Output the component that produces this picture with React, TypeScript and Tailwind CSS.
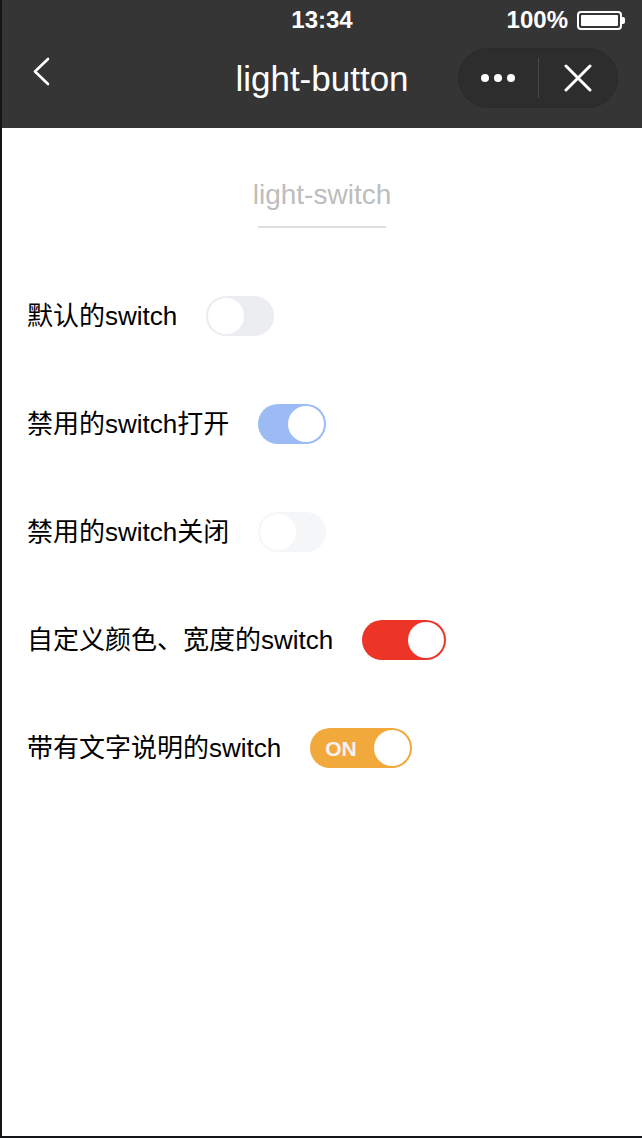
import React from "react";

type SwitchProps = {
  checked?: boolean;
  trackClass: string;
  width: string;
  label?: string;
};

function Switch({ checked, trackClass, width, label }: SwitchProps) {
  return (
    <div
      className={`flex h-[40px] shrink-0 items-center rounded-full p-[2px] ${width} ${trackClass} ${
        checked ? "justify-end" : "justify-start"
      }`}
    >
      {label ? (
        <span className="mr-auto pl-[13px] text-[21px] font-semibold leading-none text-[#f4f2f5]">{label}</span>
      ) : null}
      <span className="h-[36px] w-[36px] rounded-full bg-white" />
    </div>
  );
}

const rows: { text: string; el: React.ReactNode }[] = [
  {
    text: "默认的switch",
    el: <Switch width="w-[68px]" trackClass="bg-[#ebedf0]" />,
  },
  {
    text: "禁用的switch打开",
    el: <Switch checked width="w-[68px]" trackClass="bg-[#9cbaf4]" />,
  },
  {
    text: "禁用的switch关闭",
    el: <Switch width="w-[68px]" trackClass="bg-[#f5f6f8]" />,
  },
  {
    text: "自定义颜色、宽度的switch",
    el: <Switch checked width="w-[84px]" trackClass="bg-[#ec3527]" />,
  },
  {
    text: "带有文字说明的switch",
    el: <Switch checked label="ON" width="w-[102px]" trackClass="bg-[#f2a93c]" />,
  },
];

export default function App() {
  return (
    <div
      className="flex h-[1138px] w-[642px] flex-col overflow-hidden border-b-2 border-l-2 border-[#131619] bg-white"
      style={{ fontFamily: '"Liberation Sans", Arial, "Noto Sans CJK SC", sans-serif' }}
    >
      {/* status + nav bar */}
      <div className="h-[128px] shrink-0 bg-[#353535] text-white">
        <div className="relative flex h-[40px] items-center justify-center">
          <span className="text-[24px] font-semibold leading-none">13:34</span>
          <div className="absolute right-[17px] top-[8px] flex items-center gap-[9px]">
            <span className="text-[24px] font-semibold leading-none">100%</span>
            <div className="flex items-center">
              <div className="h-[19px] w-[45px] rounded-[4px] border-2 border-white p-[2px]">
                <div className="h-full w-full rounded-[1px] bg-white" />
              </div>
              <div className="h-[7px] w-[3px] rounded-r-[2px] bg-white" />
            </div>
          </div>
        </div>
        <div className="relative flex h-[88px] items-center justify-center">
          <svg
            className="absolute left-[29px] top-[17px]"
            width="20"
            height="29"
            viewBox="0 0 20 29"
            fill="none"
            stroke="white"
            strokeWidth="2.6"
            strokeLinecap="round"
            strokeLinejoin="round"
          >
            <path d="M17 2 L4 14.5 L17 27" />
          </svg>
          <span className="mb-[12px] text-[35px] leading-none">light-button</span>
          <div className="absolute right-[24px] top-[8px] flex h-[60px] w-[160px] items-center rounded-full border border-[#2a2a2a] bg-[#2d2d2d]">
            <div className="flex flex-1 items-center justify-center gap-[5px]">
              <span className="h-[8px] w-[8px] rounded-full bg-white" />
              <span className="h-[8px] w-[8px] rounded-full bg-white" />
              <span className="h-[8px] w-[8px] rounded-full bg-white" />
            </div>
            <div className="h-[40px] w-px bg-[#484848]" />
            <div className="flex flex-1 items-center justify-center">
              <svg width="28" height="28" viewBox="0 0 28 28" stroke="white" strokeWidth="3" strokeLinecap="round">
                <path d="M2 2 L26 26 M26 2 L2 26" />
              </svg>
            </div>
          </div>
        </div>
      </div>

      {/* body */}
      <div className="flex flex-col">
        <div className="mt-[47px] flex flex-col items-center">
          <span className="text-[28px] leading-[40px] text-[#bdbdbd]">light-switch</span>
          <div className="mt-[11px] h-[2px] w-[128px] bg-[#dedede]" />
        </div>

        <div className="mt-[68px] flex flex-col gap-[68px] pl-[25px]">
          {rows.map((r) => (
            <div key={r.text} className="flex h-[40px] items-center gap-[29px]">
              <span className="text-[26px] leading-none text-black">{r.text}</span>
              {r.el}
            </div>
          ))}
        </div>
      </div>
    </div>
  );
}
